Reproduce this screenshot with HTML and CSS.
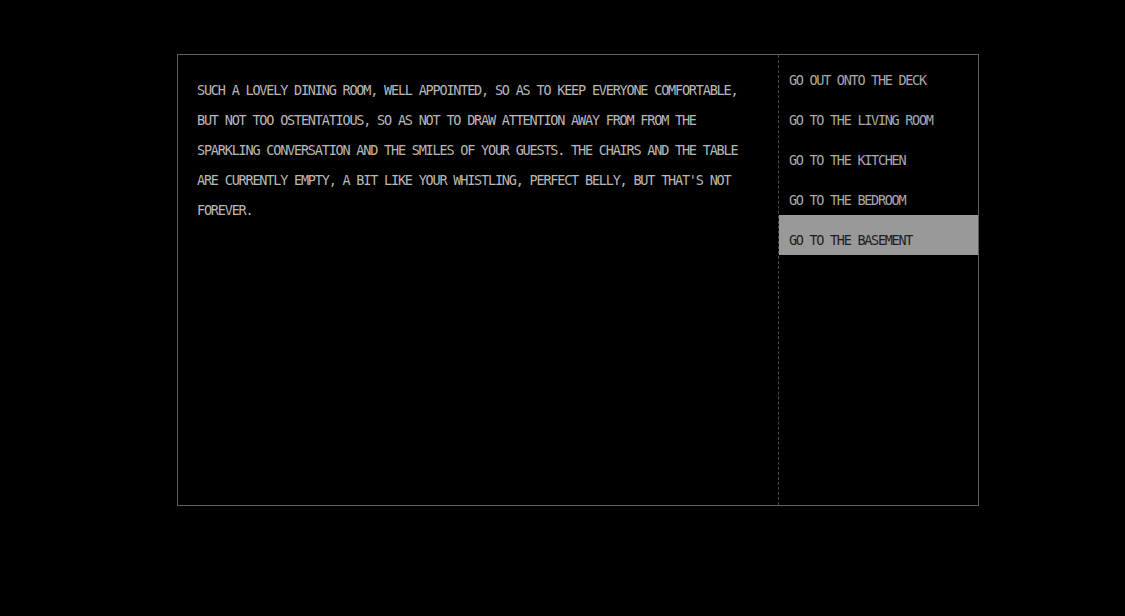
FILE: index.html
```html
<!DOCTYPE html>
<html>
<head>
<meta charset="utf-8">
<link rel="stylesheet" href="styles.css">
</head>
<body>
<div class="frame">
  <div class="story">
    <p class="story-text">SUCH A LOVELY DINING ROOM, WELL APPOINTED, SO AS TO KEEP EVERYONE COMFORTABLE, BUT NOT TOO OSTENTATIOUS, SO AS NOT TO DRAW ATTENTION AWAY FROM FROM THE SPARKLING CONVERSATION AND THE SMILES OF YOUR GUESTS. THE CHAIRS AND THE TABLE ARE CURRENTLY EMPTY, A BIT LIKE YOUR WHISTLING, PERFECT BELLY, BUT THAT'S NOT FOREVER.</p>
  </div>
  <ul class="choices">
    <li class="choice">GO OUT ONTO THE DECK</li>
    <li class="choice">GO TO THE LIVING ROOM</li>
    <li class="choice">GO TO THE KITCHEN</li>
    <li class="choice">GO TO THE BEDROOM</li>
    <li class="choice active">GO TO THE BASEMENT</li>
  </ul>
</div>
</body>
</html>
```

FILE: styles.css
```css
html, body {
  margin: 0;
  padding: 0;
  background: #000;
}
body {
  width: 1125px;
  height: 616px;
  padding-top: 54px;
  box-sizing: border-box;
  font-family: "DejaVu Sans Mono", "Liberation Mono", monospace;
  font-size: 13.5px;
  letter-spacing: -1.29px;
}
.frame {
  margin-left: 177px;
  width: 802px;
  height: 452px;
  box-sizing: border-box;
  border: 1px solid #5e5e5e;
  display: flex;
}
.story {
  width: 600px;
  flex: none;
  padding: 20px 20px 0 20px;
  box-sizing: border-box;
}
.story-text {
  margin: 0 0 0 -1px;
  color: #b8b8b8;
  line-height: 30px;
  letter-spacing: -1.2px;
}
.choices {
  list-style: none;
  margin: 0;
  padding: 0;
  flex: 1;
  border-left: 1px dashed #4a4a4a;
}
.choice {
  height: 40px;
  box-sizing: border-box;
  padding: 10px 0 0 10px;
  line-height: 30px;
  color: #a8a8a8;
}
.choice.active {
  background: #999;
  color: #1e1e1e;
}
```
